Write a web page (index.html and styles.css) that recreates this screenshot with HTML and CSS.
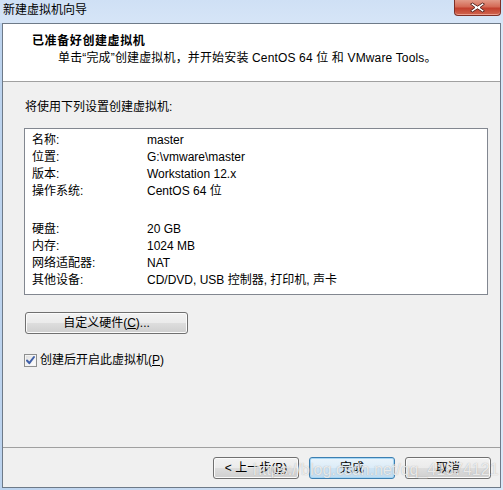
FILE: index.html
```html
<!DOCTYPE html>
<html lang="zh-CN">
<head>
<meta charset="utf-8">
<title>新建虚拟机向导</title>
<link rel="stylesheet" href="styles.css">
</head>
<body>
<div class="window">
  <div class="titlebar">
    <span class="title">新建虚拟机向导</span>
    <span class="close">
      <svg width="17" height="11" viewBox="0 0 17 11"><path d="M3.5 1 L8.5 4.2 L13.5 1 L15.5 2.2 L11 5.5 L15.5 8.8 L13.5 10 L8.5 6.8 L3.5 10 L1.5 8.8 L6 5.5 L1.5 2.2 Z" fill="#fff" stroke="#5a2a24" stroke-width="1" stroke-linejoin="round"/></svg>
    </span>
  </div>
  <div class="client">
    <div class="header">
      <div class="h-title">已准备好创建虚拟机</div>
      <div class="h-sub">单击“完成”创建虚拟机，并开始安装 CentOS 64 位 和 VMware Tools。</div>
    </div>
    <div class="content">
      <div class="intro">将使用下列设置创建虚拟机:</div>
      <div class="summary">
        <div class="row"><span class="k">名称:</span><span class="v">master</span></div>
        <div class="row"><span class="k">位置:</span><span class="v">G:\vmware\master</span></div>
        <div class="row"><span class="k">版本:</span><span class="v">Workstation 12.x</span></div>
        <div class="row"><span class="k">操作系统:</span><span class="v">CentOS 64 位</span></div>
        <div class="gap"></div>
        <div class="row"><span class="k">硬盘:</span><span class="v">20 GB</span></div>
        <div class="row"><span class="k">内存:</span><span class="v">1024 MB</span></div>
        <div class="row"><span class="k">网络适配器:</span><span class="v">NAT</span></div>
        <div class="row"><span class="k">其他设备:</span><span class="v">CD/DVD, USB 控制器, 打印机, 声卡</span></div>
      </div>
      <button class="btn wide">自定义硬件(<u>C</u>)...</button>
      <label class="check">
        <span class="box"><svg width="11" height="11" viewBox="0 0 11 11"><path d="M2 5.5 L4.3 8.2 L9 2" fill="none" stroke="#4060a8" stroke-width="2" stroke-linecap="round" stroke-linejoin="round"/></svg></span>
        <span>创建后开启此虚拟机(<u>P</u>)</span>
      </label>
    </div>
    <div class="footer">
      <button class="btn">&lt; 上一步(<u>B</u>)</button>
      <button class="btn default">完成</button>
      <button class="btn">取消</button>
      <span class="watermark">https://blog.csdn.net/qq_41874121</span>
    </div>
  </div>
</div>
</body>
</html>
```

FILE: styles.css
```css
html, body {
  margin: 0;
  padding: 0;
}
body {
  width: 503px;
  height: 490px;
  overflow: hidden;
  background: #c2d7ef;
  font-family: "Liberation Sans", "Noto Sans CJK SC", sans-serif;
  font-size: 12px;
  color: #000;
}
.window {
  width: 503px;
  height: 490px;
  display: flex;
  flex-direction: column;
  background: linear-gradient(to right, #bcd3ee 0%, #cadcf2 40%, #d9e7f7 100%);
}
.titlebar {
  height: 23px;
  display: flex;
  align-items: flex-start;
  justify-content: space-between;
  background: linear-gradient(to bottom, #cfe0f5 0%, #d6e5f7 100%);
}
.title {
  margin: 2px 0 0 3px;
  line-height: 16px;
  font-size: 12px;
  color: #000;
}
.close {
  width: 45px;
  height: 15px;
  margin-right: 2px;
  border: 1px solid #7d2f26;
  border-top: none;
  border-radius: 0 0 4px 4px;
  background: linear-gradient(to bottom, #e29a88 0%, #d46a56 45%, #c2402e 55%, #d0654f 100%);
  box-shadow: inset 0 -1px 0 rgba(255, 200, 190, 0.6);
  display: flex;
  align-items: center;
  justify-content: center;
}
.client {
  box-sizing: border-box;
  margin-left: 2px;
  width: 499px;
  height: 465px;
  border: 1px solid #6e7a88;
  background: #f0f0f0;
  display: flex;
  flex-direction: column;
}
.header {
  height: 57px;
  background: #fff;
  border-bottom: 1px solid #a0a0a0;
}
.h-title {
  margin: 9px 0 0 29px;
  line-height: 16px;
  font-weight: bold;
  letter-spacing: 0.6px;
}
.h-sub {
  margin: 1px 0 0 55px;
  line-height: 16px;
  letter-spacing: 0.15px;
}
.content {
  flex: 1;
  padding: 17px 12px 0 21px;
  display: flex;
  flex-direction: column;
  align-items: flex-start;
}
.intro {
  line-height: 16px;
  margin-left: 1px;
}
.summary {
  box-sizing: border-box;
  align-self: stretch;
  margin-top: 13px;
  background: #fff;
  border: 1px solid #828790;
  padding: 3px 0 5px 7px;
}
.row {
  display: flex;
  height: 17px;
  line-height: 17px;
  white-space: nowrap;
}
.k {
  width: 115px;
}
.gap {
  height: 21px;
}
.btn {
  box-sizing: border-box;
  width: 86px;
  height: 22px;
  padding: 0;
  font-family: inherit;
  font-size: 12px;
  color: #000;
  line-height: 18px;
  border: 1px solid #707070;
  border-radius: 3px;
  background: linear-gradient(to bottom, #f2f2f2 0%, #ebebeb 48%, #dddddd 52%, #cfcfcf 100%);
  box-shadow: inset 0 0 0 1px #fbfbfb;
}
.btn u {
  text-decoration: underline;
}
.btn.wide {
  width: 163px;
  margin-top: 17px;
  margin-left: 1px;
}
.btn.default {
  border-color: #3c7fb1;
  background: linear-gradient(to bottom, #eaf4fb 0%, #dcecf8 48%, #cde3f3 52%, #c2dcef 100%);
  box-shadow: inset 0 0 0 1px #a6d6f5;
}
.check {
  margin-top: 18px;
  display: flex;
  align-items: center;
  gap: 3px;
  line-height: 16px;
}
.box {
  box-sizing: border-box;
  width: 13px;
  height: 13px;
  border: 1px solid #8e8f8f;
  background: linear-gradient(135deg, #dcdcdc 0%, #f4f4f4 60%, #ffffff 100%);
  box-shadow: inset 0 0 0 1px #f4f4f4;
  display: flex;
  align-items: center;
  justify-content: center;
}
.footer {
  position: relative;
  height: 40px;
  box-sizing: border-box;
  border-top: 1px solid #a0a0a0;
  padding: 9px 9px 0 0;
  display: flex;
  justify-content: flex-end;
  gap: 10px;
}
.watermark {
  position: absolute;
  left: 250px;
  top: 13px;
  font-family: "Liberation Sans", sans-serif;
  font-size: 16px;
  line-height: 18px;
  color: rgba(255, 255, 255, 0.75);
  text-shadow: 0 0 1px rgba(120, 120, 120, 0.6);
  pointer-events: none;
  white-space: nowrap;
}
```
